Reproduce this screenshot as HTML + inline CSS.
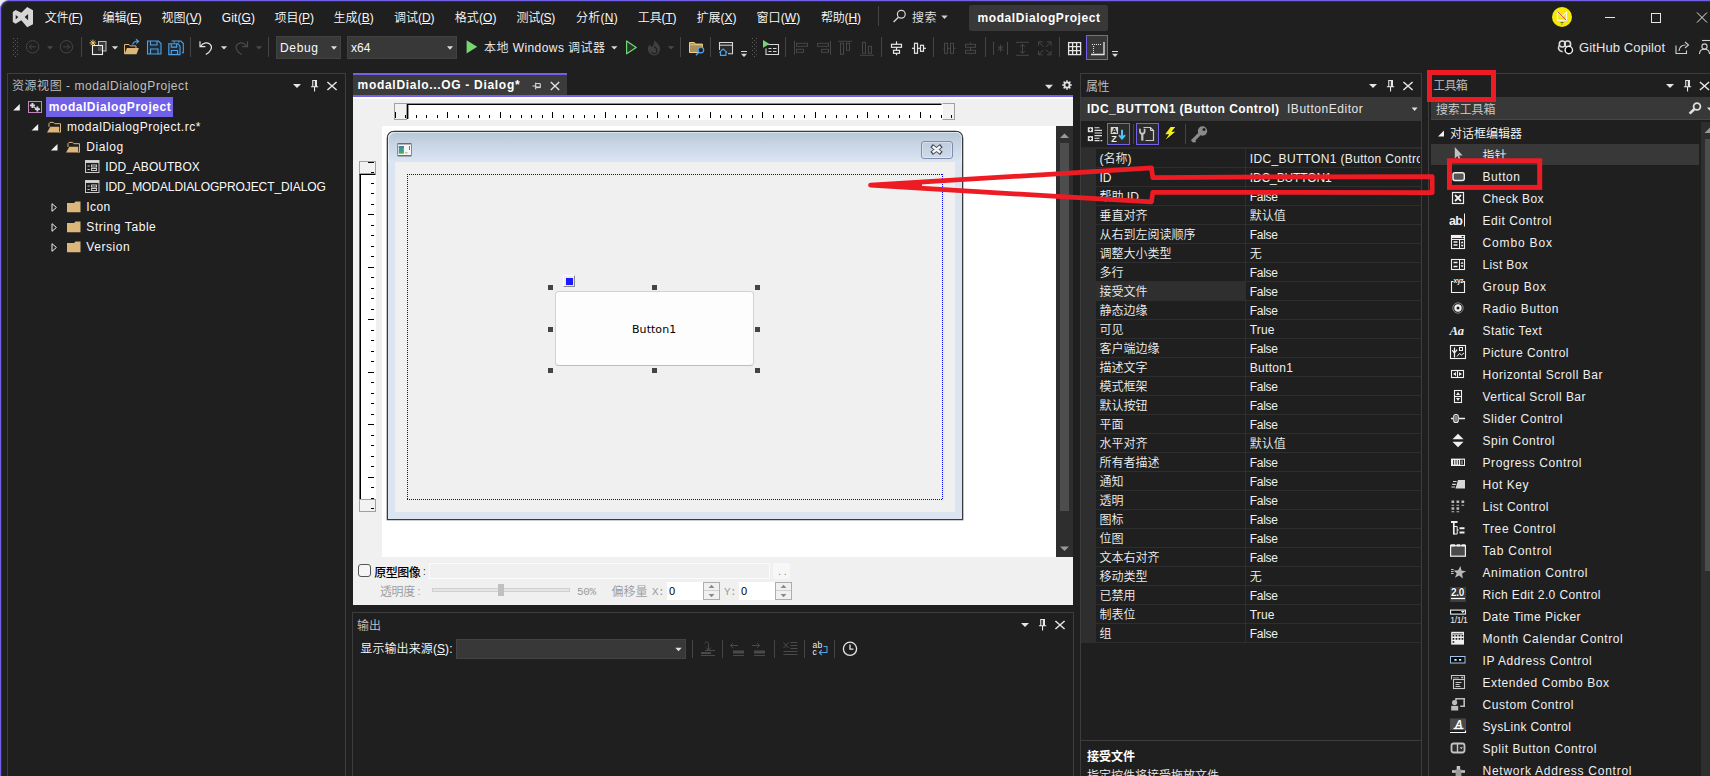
<!DOCTYPE html>
<html lang="zh-CN"><head><meta charset="utf-8">
<title>modalDialogProject - Microsoft Visual Studio</title>
<style>
html,body{margin:0;padding:0;}
body{width:1710px;height:776px;overflow:hidden;background:#1f1f1f;position:relative;
 font-family:"Liberation Sans","Noto Sans CJK SC",sans-serif;font-size:12px;}
.r{position:absolute;}
.t{position:absolute;white-space:nowrap;font-weight:350;}
.cj{font-family:"Noto Sans CJK SC","Liberation Sans",sans-serif;}
.tah{font-family:"DejaVu Sans","Liberation Sans",sans-serif;}
.mono{font-family:"Liberation Mono",monospace;}
svg.ov{position:absolute;left:0;top:0;}
</style></head><body>
<div class="r" style="left:0px;top:0px;width:10px;height:10px;background:#e9e9ee;"></div>
<div class="r" style="left:0px;top:0px;width:1710px;height:776px;background:#1f1f1f;border-top-left-radius:9px;border-top:1px solid #7160e8;border-left:1px solid #7160e8;box-shadow:inset 1px 1px 0 rgba(113,96,232,.22);box-sizing:border-box;"></div>
<div class="r" style="left:878px;top:6px;width:1px;height:20px;background:#444;"></div>
<div class="r" style="left:969px;top:5px;width:139px;height:26px;background:#383838;border-radius:2px;"></div>
<div class="r" style="left:81px;top:37px;width:1px;height:20px;background:#444444;"></div>
<div class="r" style="left:190px;top:37px;width:1px;height:20px;background:#444444;"></div>
<div class="r" style="left:268px;top:37px;width:1px;height:20px;background:#444444;"></div>
<div class="r" style="left:276px;top:36px;width:65px;height:23px;background:#383838;border:1px solid #424242;box-sizing:border-box;"></div>
<div class="r" style="left:347px;top:36px;width:110px;height:23px;background:#383838;border:1px solid #424242;box-sizing:border-box;"></div>
<div class="r" style="left:680px;top:37px;width:1px;height:20px;background:#444444;"></div>
<div class="r" style="left:710px;top:37px;width:1px;height:20px;background:#444444;"></div>
<div class="r" style="left:785px;top:37px;width:1px;height:20px;background:#444444;"></div>
<div class="r" style="left:881px;top:37px;width:1px;height:20px;background:#444444;"></div>
<div class="r" style="left:933px;top:37px;width:1px;height:20px;background:#444444;"></div>
<div class="r" style="left:985px;top:37px;width:1px;height:20px;background:#444444;"></div>
<div class="r" style="left:1059px;top:37px;width:1px;height:20px;background:#444444;"></div>
<div class="r" style="left:1086px;top:35px;width:22px;height:25px;background:#383838;border:1px solid #7160e8;box-sizing:border-box;"></div>
<div class="r" style="left:7px;top:73px;width:339px;height:720px;border:1px solid #3d3d3d;box-sizing:border-box;"></div>
<div class="r" style="left:46px;top:97px;width:127px;height:20px;background:#7160e8;"></div>
<div class="r" style="left:353px;top:73px;width:214px;height:24px;background:#3b3b3b;border-top:2px solid #7160e8;box-sizing:border-box;"></div>
<div class="r" style="left:353px;top:95px;width:720px;height:2px;background:#7160e8;"></div>
<div class="r" style="left:353px;top:97px;width:720px;height:508px;background:#f0f0f0;"></div>
<div class="r" style="left:353px;top:97px;width:720px;height:2px;background:#ffffff;"></div>
<div class="r" style="left:382px;top:126px;width:675px;height:431px;background:#ffffff;"></div>
<div class="r" style="left:1056px;top:126px;width:17px;height:431px;background:#2e2e2e;"></div>
<div class="r" style="left:1060px;top:143px;width:9px;height:368px;background:#4d4d4d;"></div>
<div class="r" style="left:394px;top:103px;width:561px;height:17px;background:#ffffff;"></div>
<div class="r" style="left:394px;top:103px;width:13px;height:17px;background:#f2f2f2;border:1px solid #a0a0a0;box-sizing:border-box;"></div>
<div class="r" style="left:942px;top:103px;width:13px;height:17px;background:#f2f2f2;border:1px solid #a0a0a0;box-sizing:border-box;border-left-color:#ffffff;"></div>
<div class="r" style="left:359px;top:161px;width:17px;height:351px;background:#ffffff;"></div>
<div class="r" style="left:359px;top:161px;width:17px;height:13px;background:#f2f2f2;border:1px solid #a0a0a0;box-sizing:border-box;"></div>
<div class="r" style="left:359px;top:499px;width:17px;height:13px;background:#f2f2f2;border:1px solid #a0a0a0;box-sizing:border-box;"></div>
<div class="r" style="left:387px;top:131px;width:576px;height:389px;background:#dbe5f2;border:1px solid #3a3a3a;box-sizing:border-box;border-radius:7px 7px 0 0;box-shadow:0 0 0 0.3px #3a3a3a;"></div>
<div class="r" style="left:388px;top:132px;width:574px;height:31px;border-radius:6px 6px 0 0;background:linear-gradient(#b7c7d8,#c9d6e6 45%,#dce6f4);box-shadow:inset 1px 1px 0 rgba(255,255,255,.55), inset -1px 0 0 rgba(255,255,255,.4);"></div>
<div class="r" style="left:395px;top:162px;width:560px;height:350px;background:#f0f0f0;"></div>
<div class="r" style="left:921px;top:141px;width:32px;height:18px;border:1px solid #7f8daa;box-sizing:border-box;border-radius:3px;background:linear-gradient(#bfccde,#cfdbea);box-shadow:inset 0 0 0 1px rgba(255,255,255,.35);"></div>
<div class="r" style="left:407px;top:174px;width:536px;height:1px;background:repeating-linear-gradient(90deg,#0000ff 0 1px,transparent 1px 2px);"></div>
<div class="r" style="left:407px;top:499px;width:536px;height:1px;background:repeating-linear-gradient(90deg,#0000ff 0 1px,transparent 1px 2px);"></div>
<div class="r" style="left:407px;top:174px;width:1px;height:326px;background:repeating-linear-gradient(180deg,#0000ff 0 1px,transparent 1px 2px);"></div>
<div class="r" style="left:942px;top:174px;width:1px;height:326px;background:repeating-linear-gradient(180deg,#0000ff 0 1px,transparent 1px 2px);"></div>
<div class="r" style="left:555px;top:291px;width:199px;height:75px;background:#fdfdfd;border:1px solid #d2d2d2;box-sizing:border-box;border-radius:4px;border-bottom-color:#bdbdbd;"></div>
<div class="r" style="left:548px;top:285px;width:5px;height:5px;background:#444444;"></div>
<div class="r" style="left:548px;top:327px;width:5px;height:5px;background:#444444;"></div>
<div class="r" style="left:548px;top:368px;width:5px;height:5px;background:#444444;"></div>
<div class="r" style="left:652px;top:285px;width:5px;height:5px;background:#444444;"></div>
<div class="r" style="left:652px;top:368px;width:5px;height:5px;background:#444444;"></div>
<div class="r" style="left:755px;top:285px;width:5px;height:5px;background:#444444;"></div>
<div class="r" style="left:755px;top:327px;width:5px;height:5px;background:#444444;"></div>
<div class="r" style="left:755px;top:368px;width:5px;height:5px;background:#444444;"></div>
<div class="r" style="left:563px;top:275px;width:12px;height:12px;background:#ececec;border:1px solid;border-color:#ffffff #8a8a8a #8a8a8a #ffffff;box-sizing:border-box;"></div>
<div class="r" style="left:566px;top:278px;width:7px;height:7px;background:#1a1aff;"></div>
<div class="r" style="left:358px;top:564px;width:13px;height:13px;background:#f5f5f5;border:1px solid #555555;box-sizing:border-box;border-radius:3px;"></div>
<div class="r" style="left:429px;top:563px;width:341px;height:16px;background:#f0f0f0;border:1px solid #fbfbfb;box-sizing:border-box;"></div>
<div class="r" style="left:773px;top:563px;width:17px;height:16px;background:#f7f7f7;border-radius:3px;"></div>
<div class="r" style="left:432px;top:588px;width:138px;height:4px;background:#e4e4e4;border:1px solid #d0d0d0;box-sizing:border-box;"></div>
<div class="r" style="left:498px;top:584px;width:6px;height:12px;background:#c0c0c0;"></div>
<div class="r" style="left:667px;top:582px;width:53px;height:18px;background:#ffffff;"></div>
<div class="r" style="left:703px;top:582px;width:17px;height:18px;background:#f0f0f0;border:1px solid #adadad;box-sizing:border-box;"></div>
<div class="r" style="left:704px;top:590px;width:15px;height:1px;background:#d0d0d0;"></div>
<div class="r" style="left:739px;top:582px;width:53px;height:18px;background:#ffffff;"></div>
<div class="r" style="left:775px;top:582px;width:17px;height:18px;background:#f0f0f0;border:1px solid #adadad;box-sizing:border-box;"></div>
<div class="r" style="left:776px;top:590px;width:15px;height:1px;background:#d0d0d0;"></div>
<div class="r" style="left:352px;top:612px;width:722px;height:180px;border:1px solid #3d3d3d;box-sizing:border-box;"></div>
<div class="r" style="left:456px;top:639px;width:230px;height:20px;background:#383838;border:1px solid #434343;box-sizing:border-box;"></div>
<div class="r" style="left:692px;top:640px;width:1px;height:18px;background:#444;"></div>
<div class="r" style="left:722px;top:640px;width:1px;height:18px;background:#444;"></div>
<div class="r" style="left:774px;top:640px;width:1px;height:18px;background:#444;"></div>
<div class="r" style="left:804px;top:640px;width:1px;height:18px;background:#444;"></div>
<div class="r" style="left:834px;top:640px;width:1px;height:18px;background:#444;"></div>
<div class="r" style="left:1080px;top:73px;width:342px;height:720px;border:1px solid #3d3d3d;box-sizing:border-box;"></div>
<div class="r" style="left:1081px;top:97px;width:340px;height:24px;background:#383838;"></div>
<div class="r" style="left:1107px;top:123px;width:23px;height:22px;background:#2c2c2c;border:1px solid #7160e8;box-sizing:border-box;"></div>
<div class="r" style="left:1133px;top:124px;width:1px;height:20px;background:#444;"></div>
<div class="r" style="left:1136px;top:123px;width:23px;height:22px;background:#2c2c2c;border:1px solid #7160e8;box-sizing:border-box;"></div>
<div class="r" style="left:1185px;top:124px;width:1px;height:20px;background:#444;"></div>
<div class="r" style="left:1081px;top:147px;width:15px;height:496px;background:#2e2e2e;"></div>
<div class="r" style="left:1081px;top:147px;width:340px;height:2px;background:#2c2c2c;"></div>
<div class="r" style="left:1096px;top:148px;width:325px;height:1px;background:#2e2e2e;"></div>
<div class="r" style="left:1096px;top:167px;width:325px;height:1px;background:#2e2e2e;"></div>
<div class="r" style="left:1096px;top:186px;width:325px;height:1px;background:#2e2e2e;"></div>
<div class="r" style="left:1096px;top:205px;width:325px;height:1px;background:#2e2e2e;"></div>
<div class="r" style="left:1096px;top:224px;width:325px;height:1px;background:#2e2e2e;"></div>
<div class="r" style="left:1096px;top:243px;width:325px;height:1px;background:#2e2e2e;"></div>
<div class="r" style="left:1096px;top:262px;width:325px;height:1px;background:#2e2e2e;"></div>
<div class="r" style="left:1096px;top:281px;width:325px;height:1px;background:#2e2e2e;"></div>
<div class="r" style="left:1096px;top:282px;width:149px;height:18px;background:#2f2f2f;"></div>
<div class="r" style="left:1096px;top:300px;width:325px;height:1px;background:#2e2e2e;"></div>
<div class="r" style="left:1096px;top:319px;width:325px;height:1px;background:#2e2e2e;"></div>
<div class="r" style="left:1096px;top:338px;width:325px;height:1px;background:#2e2e2e;"></div>
<div class="r" style="left:1096px;top:357px;width:325px;height:1px;background:#2e2e2e;"></div>
<div class="r" style="left:1096px;top:376px;width:325px;height:1px;background:#2e2e2e;"></div>
<div class="r" style="left:1096px;top:395px;width:325px;height:1px;background:#2e2e2e;"></div>
<div class="r" style="left:1096px;top:414px;width:325px;height:1px;background:#2e2e2e;"></div>
<div class="r" style="left:1096px;top:433px;width:325px;height:1px;background:#2e2e2e;"></div>
<div class="r" style="left:1096px;top:452px;width:325px;height:1px;background:#2e2e2e;"></div>
<div class="r" style="left:1096px;top:471px;width:325px;height:1px;background:#2e2e2e;"></div>
<div class="r" style="left:1096px;top:490px;width:325px;height:1px;background:#2e2e2e;"></div>
<div class="r" style="left:1096px;top:509px;width:325px;height:1px;background:#2e2e2e;"></div>
<div class="r" style="left:1096px;top:528px;width:325px;height:1px;background:#2e2e2e;"></div>
<div class="r" style="left:1096px;top:547px;width:325px;height:1px;background:#2e2e2e;"></div>
<div class="r" style="left:1096px;top:566px;width:325px;height:1px;background:#2e2e2e;"></div>
<div class="r" style="left:1096px;top:585px;width:325px;height:1px;background:#2e2e2e;"></div>
<div class="r" style="left:1096px;top:604px;width:325px;height:1px;background:#2e2e2e;"></div>
<div class="r" style="left:1096px;top:623px;width:325px;height:1px;background:#2e2e2e;"></div>
<div class="r" style="left:1096px;top:642px;width:325px;height:1px;background:#2e2e2e;"></div>
<div class="r" style="left:1245px;top:148px;width:1px;height:495px;background:#2e2e2e;"></div>
<div class="r" style="left:1081px;top:740px;width:340px;height:1px;background:#3d3d3d;"></div>
<div class="r" style="left:1428px;top:73px;width:300px;height:720px;border:1px solid #3d3d3d;box-sizing:border-box;"></div>
<div class="r" style="left:1431px;top:97px;width:279px;height:23px;background:#383838;border-bottom:1px solid #464646;box-sizing:border-box;"></div>
<div class="r" style="left:1701px;top:122px;width:9px;height:660px;background:#2e2e2e;"></div>
<div class="r" style="left:1705px;top:139px;width:5px;height:432px;background:#4d4d4d;"></div>
<div class="r" style="left:1431px;top:144px;width:268px;height:21px;background:#383838;"></div>
<div class="r" style="left:1450px;top:587px;width:16px;height:15px;background:#3e3e3e;"></div>
<svg class="ov" width="1710" height="776" viewBox="0 0 1710 776">
<path d="M27.2 7L33 10.2V24.2L27.2 27.2L21.3 20.2L15.7 23.8L12.8 21.9V11.9L15.7 10L21.3 12.8Z M28.1 14V20.2L24.7 17.1Z M15.7 14.9V19.4L18.3 17.1Z" fill="#d6d6d6" fill-rule="evenodd"/>
<circle cx="901.3" cy="14.3" r="3.9" fill="none" stroke="#d8d8d8" stroke-width="1.2"/>
<path d="M898.4 17.2L893.6 22" fill="none" stroke="#d8d8d8" stroke-width="1.3" />
<path d="M941.25 15.55h6.5l-3.25 3.5z" fill="#d0d0d0" />
<circle cx="1562" cy="17" r="10" fill="#f5e90a"/>
<path d="M1557.5 12.3v8h9v-8l-4.5 4.4z" fill="none" stroke="#fbf6dc" stroke-width="1.3" />
<path d="M1557.6 11.6l8.4 8.6" fill="none" stroke="#d23c6e" stroke-width="1" />
<path d="M1560.5 22.5h3M1561.3 24h1.4" fill="none" stroke="#5a4c10" stroke-width="0.8" />
<line x1="1605" y1="17.5" x2="1615" y2="17.5" stroke="#e6e6e6" stroke-width="1"/>
<rect x="1651.5" y="13.5" width="9" height="9" fill="none" stroke="#e6e6e6" stroke-width="1"/>
<path d="M1697 12.5L1707 22.5M1707 12.5L1697 22.5" fill="none" stroke="#e6e6e6" stroke-width="1" />
<path d="M13 38h1v1h-1zM17 38h1v1h-1zM15 40h1v1h-1zM13 42h1v1h-1zM17 42h1v1h-1zM15 44h1v1h-1zM13 46h1v1h-1zM17 46h1v1h-1zM15 48h1v1h-1zM13 50h1v1h-1zM17 50h1v1h-1zM15 52h1v1h-1zM13 54h1v1h-1zM17 54h1v1h-1zM15 56h1v1h-1z" fill="#5c5c5c" />
<circle cx="32.6" cy="46.8" r="6.2" fill="none" stroke="#454545" stroke-width="1"/>
<path d="M35.800000000000004 46.8H29.400000000000002M29.400000000000002 46.8l2.6 -2.6M29.400000000000002 46.8l2.6 2.6" fill="none" stroke="#454545" stroke-width="1" />
<circle cx="66.4" cy="46.8" r="6.2" fill="none" stroke="#454545" stroke-width="1"/>
<path d="M63.2 46.8H69.60000000000001M69.60000000000001 46.8l-2.6 -2.6M69.60000000000001 46.8l-2.6 2.6" fill="none" stroke="#454545" stroke-width="1" />
<path d="M47.0 46.199999999999996h6l-3.0 3.4z" fill="#4a4a4a" />
<rect x="98.5" y="41.5" width="7.5" height="9.5" fill="#3a3a3a" stroke="#bdbdbd" stroke-width="1"/>
<rect x="92.5" y="45.5" width="10" height="9" fill="#2b2b2b" stroke="#f0f0f0" stroke-width="1.1"/>
<rect x="98" y="46.5" width="4" height="4.5" fill="#555555"/>
<path d="M92.9 39.6v6.6M89.6 42.9h6.6M90.6 40.6l4.6 4.6M95.2 40.6l-4.6 4.6" fill="none" stroke="#f5d67b" stroke-width="0.9" />
<path d="M111.8 46.199999999999996h6.4l-3.2 3.4z" fill="#d8d8d8" />
<path d="M124.5 54V44.5h4.5l1.2 1.4h5.8V48" fill="none" stroke="#dcb67a" stroke-width="1" />
<path d="M124.5 54.3l2.4-6.3h12l-2.4 6.3z" fill="#dcb67a" />
<path d="M132.5 44.6c1-2.4 3.3-3.6 5.4-3.2M136 39.3l2.6 2-2.3 2.3" fill="none" stroke="#4ea3e8" stroke-width="1.1" />
<path d="M147.5 41h11.0l2.5 2.5v10.5h-13.5z" fill="#1f2b36" stroke="#4ea3e8" stroke-width="1.1" />
<path d="M150.5 41v4.0h6.5v-4.0M150.5 54.0v-5.0h7.5v5.0" fill="none" stroke="#4ea3e8" stroke-width="1.1" />
<path d="M171.5 41h9.3l2.5 2.5v9.3h-1.6" fill="none" stroke="#4ea3e8" stroke-width="1.1" />
<path d="M174.2 41v1.8M178.8 41v1.8" fill="none" stroke="#4ea3e8" stroke-width="1" />
<path d="M168.8 43.8h9.129999999999999l2.0749999999999997 2.0749999999999997v8.715h-11.205z" fill="#1f2b36" stroke="#4ea3e8" stroke-width="1.1" />
<path d="M171.29000000000002 43.8v3.32h5.395v-3.32M171.29000000000002 54.589999999999996v-4.1499999999999995h6.225v4.1499999999999995" fill="none" stroke="#4ea3e8" stroke-width="1.1" />
<path d="M200 41.2v5.4h5.4" fill="none" stroke="#e6e6e6" stroke-width="1.2" />
<path d="M200.6 46.2c2.6-3.6 7.2-4.6 9.8-1.6c2.4 2.9 0.6 6.9-4.6 9.9" fill="none" stroke="#e6e6e6" stroke-width="1.2" />
<path d="M220.8 46.199999999999996h6.4l-3.2 3.4z" fill="#d8d8d8" />
<path d="M247.5 41.2v5.4h-5.4" fill="none" stroke="#4a4a4a" stroke-width="1.2" />
<path d="M246.9 46.2c-2.6-3.6-7.2-4.6-9.8-1.6c-2.4 2.9-0.6 6.9 4.6 9.9" fill="none" stroke="#4a4a4a" stroke-width="1.2" />
<path d="M255.8 46.199999999999996h6.4l-3.2 3.4z" fill="#4a4a4a" />
<path d="M331.0 46.3h6l-3.0 3.4z" fill="#e0e0e0" />
<path d="M447.0 46.3h6l-3.0 3.4z" fill="#e0e0e0" />
<path d="M466.6 40.2v13.2l10.6-6.6z" fill="#76d672" />
<path d="M611.0999999999999 46.199999999999996h6.4l-3.2 3.4z" fill="#d8d8d8" />
<path d="M626.6 41v12.8l9.6-6.4z" fill="#22382a" stroke="#76d672" stroke-width="1.2" stroke-linejoin="round"/>
<path d="M654 40.5c3.5 2 6.2 5.2 6.2 8.6a6 6 0 0 1-12.3 .4c-.2-2.3 1-4.3 2.3-5.2c0 1.4 .6 2.3 1.6 2.6c1.7-1.3 2.6-3.6 2.2-6.4z" fill="#3f3f3f" />
<path d="M654.2 46.5c2 1.4 3 3 2.8 4.8a3 3 0 0 1-5.7 .6" fill="none" stroke="#1f1f1f" stroke-width="1.1" />
<path d="M667.8 46.199999999999996h6.4l-3.2 3.4z" fill="#4a4a4a" />
<path d="M689.5 52.5V42.5h4.8l1.3 1.6h6.8v8.4z" fill="#a8905e" stroke="#f0d08a" stroke-width="1" />
<path d="M689.5 44.8h12.8" fill="none" stroke="#f0d08a" stroke-width="0.8" />
<circle cx="700.9" cy="50.1" r="2.8" fill="#1f1f1f" stroke="#4ea3e8" stroke-width="1.2"/>
<path d="M698.9 52.2L696 55.2" fill="none" stroke="#4ea3e8" stroke-width="1.3" />
<path d="M719.5 50V42.5h13v11.2h-4.5" fill="#2b2b2b" stroke="#d6d6d6" stroke-width="1.1" />
<line x1="719.5" y1="45.2" x2="732.5" y2="45.2" stroke="#d6d6d6" stroke-width="1"/>
<path d="M719.3 52.6l3.9-3.5 3.9 3.5M720.5 52v3.4h5.4v-3.4" fill="#1f1f1f" stroke="#4ea3e8" stroke-width="1.2" />
<line x1="741" y1="51.5" x2="747" y2="51.5" stroke="#d8d8d8" stroke-width="1"/>
<path d="M741.0 53.699999999999996h6l-3.0 3.2z" fill="#d8d8d8" />
<path d="M752 38h1v1h-1zM756 38h1v1h-1zM754 40h1v1h-1zM752 42h1v1h-1zM756 42h1v1h-1zM754 44h1v1h-1zM752 46h1v1h-1zM756 46h1v1h-1zM754 48h1v1h-1zM752 50h1v1h-1zM756 50h1v1h-1zM754 52h1v1h-1zM752 54h1v1h-1zM756 54h1v1h-1zM754 56h1v1h-1z" fill="#5c5c5c" />
<path d="M767 44.5h11.5v10h-12.5v-6" fill="none" stroke="#d6d6d6" stroke-width="1.1" />
<path d="M763 40v7.8l6.4-3.9z" fill="#76d672" />
<path d="M768.5 48.5h3M773 48.5h3.5M768.5 51.5h3M773 51.5h3.5" fill="none" stroke="#d6d6d6" stroke-width="1.1" />
<g transform="translate(0,0.8)">
<path d="M794.5 40v14" fill="none" stroke="#474747" stroke-width="1" />
<rect x="796.5" y="42.5" width="11" height="3" fill="none" stroke="#474747"/><rect x="796.5" y="48.5" width="7" height="3" fill="none" stroke="#474747"/>
<path d="M830.5 40v14" fill="none" stroke="#474747" stroke-width="1" />
<rect x="817.5" y="42.5" width="11" height="3" fill="none" stroke="#474747"/><rect x="821.5" y="48.5" width="7" height="3" fill="none" stroke="#474747"/>
<path d="M838 40.5h14" fill="none" stroke="#474747" stroke-width="1" />
<rect x="840.5" y="42.5" width="3" height="11" fill="none" stroke="#474747"/><rect x="846.5" y="42.5" width="3" height="7" fill="none" stroke="#474747"/>
<path d="M860 54.5h14" fill="none" stroke="#474747" stroke-width="1" />
<rect x="862.5" y="41.5" width="3" height="11" fill="none" stroke="#474747"/><rect x="868.5" y="45.5" width="3" height="7" fill="none" stroke="#474747"/>
<path d="M896.5 40.5v14" fill="none" stroke="#e6e6e6" stroke-width="1.2" />
<rect x="891.5" y="43.5" width="10" height="3" fill="#1f1f1f" stroke="#e6e6e6" stroke-width="1.2"/><rect x="893.5" y="49.5" width="6" height="3" fill="#1f1f1f" stroke="#e6e6e6" stroke-width="1.2"/>
<path d="M912 47.5h14" fill="none" stroke="#e6e6e6" stroke-width="1.2" />
<rect x="914.5" y="42.5" width="3" height="10" fill="#1f1f1f" stroke="#e6e6e6" stroke-width="1.2"/><rect x="920.5" y="44.5" width="3" height="6" fill="#1f1f1f" stroke="#e6e6e6" stroke-width="1.2"/>
<path d="M943.5 47.5h12" fill="none" stroke="#474747" stroke-width="1" />
<rect x="944.5" y="42.5" width="3" height="10" fill="#1f1f1f" stroke="#474747"/><rect x="950.5" y="42.5" width="3" height="10" fill="#1f1f1f" stroke="#474747"/>
<path d="M970.5 41.5v12" fill="none" stroke="#474747" stroke-width="1" />
<rect x="965.5" y="43.5" width="10" height="3" fill="#1f1f1f" stroke="#474747"/><rect x="965.5" y="49.5" width="10" height="3" fill="#1f1f1f" stroke="#474747"/>
<path d="M993.5 41v13M1007.5 41v13" fill="none" stroke="#474747" stroke-width="1" />
<path d="M1000.5 44v7M997.6 45.6l5.8 3.8M1003.4 45.6l-5.8 3.8" fill="none" stroke="#474747" stroke-width="1" />
<path d="M1016 41.5h13M1016 54.5h13" fill="none" stroke="#474747" stroke-width="1" />
<path d="M1022.5 43.5v9M1020 46l2.5-2.5 2.5 2.5M1020 50l2.5 2.5 2.5-2.5" fill="none" stroke="#474747" stroke-width="1" />
<path d="M1038.5 45v-4h4M1047 41h4v4M1051 50v4h-4M1042.5 54h-4v-4" fill="none" stroke="#474747" stroke-width="1" />
<path d="M1039 41.5l4.5 4.5M1050.5 41.5l-4.5 4.5M1050.5 53.5l-4.5-4.5M1039 53.5l4.5-4.5" fill="none" stroke="#474747" stroke-width="1" />
</g>
<rect x="1068.6" y="42.6" width="12" height="12" fill="none" stroke="#e6e6e6" stroke-width="1.3"/>
<path d="M1072.6 42.6v12M1076.6 42.6v12M1068.6 46.6h12M1068.6 50.6h12" fill="none" stroke="#e6e6e6" stroke-width="1.3" />
<path d="M1104 42v12.5h-13" fill="none" stroke="#e6e6e6" stroke-width="1.3" />
<path d="M1092 44.5h10" fill="none" stroke="#e6e6e6" stroke-width="1" stroke-dasharray="1 1"/>
<path d="M1093.5 46v8" fill="none" stroke="#e6e6e6" stroke-width="1" stroke-dasharray="1 1"/>
<line x1="1112" y1="51.5" x2="1118" y2="51.5" stroke="#d8d8d8" stroke-width="1"/>
<path d="M1112.0 53.699999999999996h6l-3.0 3.2z" fill="#d8d8d8" />
<circle cx="1562.3" cy="44" r="3" fill="none" stroke="#dcdcdc" stroke-width="1.6"/>
<circle cx="1567.6" cy="44" r="3" fill="none" stroke="#dcdcdc" stroke-width="1.6"/>
<path d="M1559.2 45.5c-1.6 3 -.6 5.4 3.4 6.2" fill="none" stroke="#dcdcdc" stroke-width="1.5" />
<circle cx="1568.8" cy="50" r="3.7" fill="#050505" stroke="#f2f2f2" stroke-width="1.4"/>
<path d="M1676 45.5v8h10.5v-3" fill="none" stroke="#d0d0d0" stroke-width="1.1" />
<path d="M1679 51c.5-4 3-6 6.5-6M1685 42l3.5 3-3.5 3" fill="none" stroke="#d0d0d0" stroke-width="1.1" />
<circle cx="1704.5" cy="46.5" r="2.6" fill="none" stroke="#d0d0d0" stroke-width="1.1"/>
<path d="M1699.5 54c0-3.5 2-4.8 5-4.8s5 1.3 5 4.8" fill="none" stroke="#d0d0d0" stroke-width="1.1" />
<path d="M1702 40.5h8" fill="none" stroke="#d0d0d0" stroke-width="1.1" />
<path d="M293.0 83.9h8l-4.0 4.2z" fill="#e6e6e6" />
<path d="M312.2 80.0h4.8v6.2h1.2v1.1h-3.1v4.2h-1.1v-4.2h-3.1v-1.1h1.3z M313.3 81.1v5.1h1.5v-5.1z" fill="#e6e6e6" fill-rule="evenodd"/>
<path d="M327.4 82.0L336.6 90.0M336.6 82.0L327.4 90.0" fill="none" stroke="#e6e6e6" stroke-width="1.5" />
<path d="M19.8 104v6.6h-6.6z" fill="#f0f0f0" />
<rect x="28.5" y="101.5" width="13" height="11" fill="none" stroke="#c586c0" stroke-width="1"/>
<path d="M29.9 105.4h5M32.4 102.9v5M34.9 109.1h5M37.4 106.6v5" fill="none" stroke="#dcdcdc" stroke-width="1.9" />
<path d="M33.5 106.8l2.6 1.6" fill="none" stroke="#d8d8d8" stroke-width="1.2" />
<path d="M38.2 124v6.6h-6.6z" fill="#f0f0f0" />
<path d="M49 126.9V123.5l1-1.1h3.6l1.2 1.3h5.7v8.5h-1.4" fill="none" stroke="#dcb67a" stroke-width="1" />
<path d="M47 132.4l3.3-5.7h8.9v5.7z" fill="#dcb67a" />
<path d="M57.5 144v6.6h-6.6z" fill="#f0f0f0" />
<path d="M68 146.9V143.5l1-1.1h3.6l1.2 1.3h5.7v8.5h-1.4" fill="none" stroke="#dcb67a" stroke-width="1" />
<path d="M66 152.4l3.3-5.7h8.9v5.7z" fill="#dcb67a" />
<rect x="85.5" y="160.5" width="13.5" height="12" fill="none" stroke="#c8c8c8" stroke-width="1"/>
<path d="M85.5 161.9h13.5" fill="none" stroke="#d8d8d8" stroke-width="2" />
<path d="M87.5 166.0h2.2M87.5 169.5h2.2" fill="none" stroke="#c8c8c8" stroke-width="1.2" />
<rect x="91.5" y="165.0" width="5" height="2" fill="none" stroke="#c8c8c8" stroke-width="1"/>
<rect x="91.5" y="168.5" width="5" height="2" fill="none" stroke="#c8c8c8" stroke-width="1"/>
<rect x="85.5" y="180.5" width="13.5" height="12" fill="none" stroke="#c8c8c8" stroke-width="1"/>
<path d="M85.5 181.9h13.5" fill="none" stroke="#d8d8d8" stroke-width="2" />
<path d="M87.5 186.0h2.2M87.5 189.5h2.2" fill="none" stroke="#c8c8c8" stroke-width="1.2" />
<rect x="91.5" y="185.0" width="5" height="2" fill="none" stroke="#c8c8c8" stroke-width="1"/>
<rect x="91.5" y="188.5" width="5" height="2" fill="none" stroke="#c8c8c8" stroke-width="1"/>
<path d="M52.0 203.7v7.6l4.4-3.8z" fill="none" stroke="#f0f0f0" stroke-width="1" />
<path d="M67 203h7.2l1.2-1.5h5.1v10.8h-13.5z" fill="#dcb67a" />
<path d="M52.0 223.7v7.6l4.4-3.8z" fill="none" stroke="#f0f0f0" stroke-width="1" />
<path d="M67 223h7.2l1.2-1.5h5.1v10.8h-13.5z" fill="#dcb67a" />
<path d="M52.0 243.7v7.6l4.4-3.8z" fill="none" stroke="#f0f0f0" stroke-width="1" />
<path d="M67 243h7.2l1.2-1.5h5.1v10.8h-13.5z" fill="#dcb67a" />
<path d="M532.5 86h3.2M535.7 82.6v6.8M535.7 83.6h4.6v4h-4.6M536 87h4.3" fill="none" stroke="#e0e0e0" stroke-width="1" />
<path d="M550.8 82.0L559.2 90.0M559.2 82.0L550.8 90.0" fill="none" stroke="#e6e6e6" stroke-width="1.3" />
<path d="M1045.0 84.7h8l-4.0 4.2z" fill="#e0e0e0" />
<circle cx="1067" cy="85" r="2.6" fill="none" stroke="#e0e0e0" stroke-width="1.8"/>
<path d="M1067 80.2v2M1067 87.8v2M1062.2 85h2M1069.8 85h2M1063.6 81.6l1.4 1.4M1069 87l1.4 1.4M1070.4 81.6l-1.4 1.4M1065 87l-1.4 1.4" fill="none" stroke="#e0e0e0" stroke-width="1.5" />
<path d="M1060 138h9l-4.5-4.6z" fill="#999999" />
<path d="M1060 546.4h9l-4.5 4.6z" fill="#999999" />
<line x1="407" y1="103.5" x2="941.5" y2="103.5" stroke="#8c8c8c" stroke-width="1"/>
<line x1="407" y1="104.5" x2="941.5" y2="104.5" stroke="#000000" stroke-width="1"/>
<line x1="407.7" y1="104" x2="407.7" y2="119" stroke="#000000" stroke-width="1.4"/>
<path d="M395.5 112v6M405.5 115v3M416.5 115v3M426.5 115v3M437.5 115v3M447.5 112v6M458.5 115v3M468.5 115v3M479.5 115v3M489.5 115v3M500.5 112v6M510.5 115v3M521.5 115v3M531.5 115v3M542.5 115v3M552.5 112v6M563.5 115v3M573.5 115v3M584.5 115v3M594.5 115v3M605.5 112v6M615.5 115v3M626.5 115v3M636.5 115v3M647.5 115v3M657.5 112v6M668.5 115v3M678.5 115v3M689.5 115v3M699.5 115v3M710.5 112v6M720.5 115v3M731.5 115v3M741.5 115v3M752.5 115v3M762.5 112v6M773.5 115v3M783.5 115v3M794.5 115v3M804.5 115v3M815.5 112v6M825.5 115v3M836.5 115v3M846.5 115v3M857.5 115v3M867.5 112v6M878.5 115v3M888.5 115v3M899.5 115v3M909.5 115v3M920.5 112v6M930.5 115v3M941.5 115v3M951.5 115v3" fill="none" stroke="#000000" stroke-width="1" />
<line x1="360.2" y1="174" x2="360.2" y2="499" stroke="#000000" stroke-width="1.6"/>
<line x1="359.5" y1="174.5" x2="375.5" y2="174.5" stroke="#000000" stroke-width="1"/>
<path d="M368 162.5h6M371 172.5h3M371 183.5h3M371 193.5h3M371 204.5h3M368 214.5h6M371 225.5h3M371 235.5h3M371 246.5h3M371 256.5h3M368 267.5h6M371 277.5h3M371 288.5h3M371 298.5h3M371 309.5h3M368 319.5h6M371 330.5h3M371 340.5h3M371 351.5h3M371 361.5h3M368 372.5h6M371 382.5h3M371 393.5h3M371 403.5h3M371 414.5h3M368 424.5h6M371 435.5h3M371 445.5h3M371 456.5h3M371 466.5h3M368 477.5h6M371 487.5h3M371 498.5h3M371 508.5h3" fill="none" stroke="#000000" stroke-width="1" />
<rect x="397.5" y="143.8" width="14" height="12" rx="1" fill="#f6f6f6" stroke="#8a8a8a" stroke-width="1"/>
<path d="M397.5 143.8h14M397.5 155.8h14" fill="none" stroke="#5a5a5a" stroke-width="1.1" />
<rect x="398.8" y="146" width="5" height="7.4" fill="#3f9a80"/>
<rect x="398.8" y="146" width="5" height="2" fill="#4a7cc0"/>
<rect x="398.8" y="151" width="5" height="2.4" fill="#3fae5a"/>
<rect x="405" y="152.2" width="2.6" height="1.2" fill="#b0b0b0"/>
<rect x="409" y="146" width="1" height="4" fill="#3f8f9a"/>
<path d="M931.6 145.7l9.8 7.6M941.4 145.7l-9.8 7.6" fill="none" stroke="#454a58" stroke-width="4.2" />
<path d="M932.6 146.5l7.8 6M940.4 146.5l-7.8 6" fill="none" stroke="#f6f6f6" stroke-width="2.3" />
<path d="M708.5 588h6l-3-3.2z M708.5 594h6l-3 3.2z" fill="#8a8a8a" />
<path d="M780.5 588h6l-3-3.2z M780.5 594h6l-3 3.2z" fill="#8a8a8a" />
<path d="M1021.0 622.9h8l-4.0 4.2z" fill="#e6e6e6" />
<path d="M1040.2 619.0h4.8v6.2h1.2v1.1h-3.1v4.2h-1.1v-4.2h-3.1v-1.1h1.3z M1041.3 620.1v5.1h1.5v-5.1z" fill="#e6e6e6" fill-rule="evenodd"/>
<path d="M1055.4 621.0L1064.6 629.0M1064.6 621.0L1055.4 629.0" fill="none" stroke="#e6e6e6" stroke-width="1.5" />
<path d="M675.3 647.8h6.4l-3.2 3.4z" fill="#e0e0e0" />
<path d="M708.5 650v-6.3c0-2.4-3.6-2.4-3.6 0M706 647.6l2.5 2.6 2.5-2.6" fill="none" stroke="#4a4a4a" stroke-width="1" />
<path d="M705 650.5h10M701 655.5h14" fill="none" stroke="#4a4a4a" stroke-width="1" />
<path d="M701 653h10" fill="none" stroke="#4a4a4a" stroke-width="2" />
<path d="M730.5 645.5h7.5M730.5 645.5l2.4-2.4M730.5 645.5l2.4 2.4M733 655.5h11" fill="none" stroke="#4a4a4a" stroke-width="1" />
<path d="M733 652h11" fill="none" stroke="#4a4a4a" stroke-width="3" />
<path d="M752 645.5h7.5M759.5 645.5l-2.4-2.4M759.5 645.5l-2.4 2.4M754 655.5h11" fill="none" stroke="#4a4a4a" stroke-width="1" />
<path d="M754 652h11" fill="none" stroke="#4a4a4a" stroke-width="3" />
<path d="M783.5 642.5l5 5.5M788.5 642.5l-5 5.5M790.5 642.5h7M790.5 645.5h7M790.5 648.5h7M783.5 651.5h14M783.5 654.5h14" fill="none" stroke="#4a4a4a" stroke-width="1" />
<path d="M823.5 646.5h3.5v6h-7.5M821.8 650l-2.6 2.5 2.6 2.5" fill="none" stroke="#4ea3e8" stroke-width="1.1" />
<circle cx="850" cy="648.8" r="6.6" fill="none" stroke="#e6e6e6" stroke-width="1.3"/>
<path d="M850 644.6v4.6h3.4" fill="none" stroke="#e6e6e6" stroke-width="1.3" />
<path d="M1369.0 83.9h8l-4.0 4.2z" fill="#e6e6e6" />
<path d="M1388.2 80.0h4.8v6.2h1.2v1.1h-3.1v4.2h-1.1v-4.2h-3.1v-1.1h1.3z M1389.3 81.1v5.1h1.5v-5.1z" fill="#e6e6e6" fill-rule="evenodd"/>
<path d="M1403.4 82.0L1412.6 90.0M1412.6 82.0L1403.4 90.0" fill="none" stroke="#e6e6e6" stroke-width="1.5" />
<path d="M1411.6 107.6h6l-3.0 3.4z" fill="#e0e0e0" />
<rect x="1087.8" y="127.2" width="5.2" height="5" fill="#e0e0e0"/>
<path d="M1089 129.7h2.8M1090.4 128.3v2.8" fill="none" stroke="#1f1f1f" stroke-width="1" />
<rect x="1087.8" y="136.1" width="5.2" height="5" fill="#e0e0e0"/>
<path d="M1089 138.6h2.8M1090.4 137.2v2.8" fill="none" stroke="#1f1f1f" stroke-width="1" />
<path d="M1094.5 127.8h5M1094.5 130.4h7.5M1094.5 133h7.5M1094.5 135.6h7.5M1094.5 138.3h5M1094.5 140.6h5M1100.5 140.6h1.8" fill="none" stroke="#e0e0e0" stroke-width="1.1" />
<rect x="1110.7" y="127" width="7.4" height="7" fill="#d8d8d8"/>
<path d="M1122 129.8v7.6M1119 135.2l3 3.4 3-3.4" fill="none" stroke="#4fc3f7" stroke-width="2" />
<path d="M1143.5 127.5h7l3 3v10h-8" fill="none" stroke="#c8c8c8" stroke-width="1.2" />
<path d="M1150.5 127.5v3h3" fill="none" stroke="#e0e0e0" stroke-width="1" />
<path d="M1140 128.8v2.6a2.3 2.3 0 0 0 4.6 0v-2.6" fill="none" stroke="#c8c8c8" stroke-width="1.7" />
<path d="M1142.3 133.6v7" fill="none" stroke="#c8c8c8" stroke-width="2.2" />
<path d="M1171.2 127.6l-5.4 6.8h3.6l-3.8 6 .6 .6 9.4-8.6h-4l4-4.8z" fill="#0a0a0a" />
<path d="M1170.6 127h4.7l-3.8 4.7h3.8l-9.8 8.4 3.6-5.9h-3.8z" fill="#f5ee1c" />
<circle cx="1202.5" cy="131" r="4.7" fill="#8a8a8a"/>
<circle cx="1204" cy="129.5" r="1.5" fill="#1f1f1f"/>
<path d="M1199.5 134l-7.5 7.5" fill="none" stroke="#8a8a8a" stroke-width="3.2" />
<path d="M1193 139.5l2.5 2.5" fill="none" stroke="#8a8a8a" stroke-width="2" />
<path d="M1666.0 83.9h8l-4.0 4.2z" fill="#e6e6e6" />
<path d="M1685.2 80.0h4.8v6.2h1.2v1.1h-3.1v4.2h-1.1v-4.2h-3.1v-1.1h1.3z M1686.3 81.1v5.1h1.5v-5.1z" fill="#e6e6e6" fill-rule="evenodd"/>
<path d="M1699.9 82.0L1709.1 90.0M1709.1 82.0L1699.9 90.0" fill="none" stroke="#e6e6e6" stroke-width="1.5" />
<circle cx="1697" cy="106.5" r="3.4" fill="none" stroke="#e0e0e0" stroke-width="1.8"/>
<path d="M1694.4 109l-4.8 4.6" fill="none" stroke="#e0e0e0" stroke-width="2.6" />
<path d="M1707.0 107.5h5l-2.5 3z" fill="#e0e0e0" />
<path d="M1704.6 133h11l-5.5-5.5z" fill="#999999" />
<path d="M1444 130.5v6h-6z" fill="#f0f0f0" />
<path d="M1454.8 147v11.4l2.6-2.4 1.8 4 1.6-.8-1.8-3.8h3.6z" fill="#c2c2c2" />
<rect x="1453" y="172.7" width="11.3" height="7.8" rx="2" fill="#555555" stroke="#f0f0f0" stroke-width="1.4"/>
<rect x="1452.5" y="192.5" width="11" height="11" fill="none" stroke="#f0f0f0" stroke-width="1.2"/>
<path d="M1455 195l6 6M1461 195l-6 6" fill="none" stroke="#f0f0f0" stroke-width="1.8" />
<path d="M1464.5 213.5v13" fill="none" stroke="#f0f0f0" stroke-width="1" />
<rect x="1451.5" y="235.5" width="13" height="13" fill="none" stroke="#f0f0f0" stroke-width="1.1"/>
<path d="M1451.5 236.8h13" fill="none" stroke="#f0f0f0" stroke-width="2.6" />
<path d="M1461.2 236h2.8l-1.4 1.7z" fill="#1a1a1a" />
<path d="M1451.5 239.5h13M1459.5 239.5v9" fill="none" stroke="#f0f0f0" stroke-width="1" />
<path d="M1453.5 242h4M1453.5 245h4" fill="none" stroke="#f0f0f0" stroke-width="1.3" />
<path d="M1460.6 243.2h3l-1.5-2.2zM1460.6 244.8h3l-1.5 2.2z" fill="#f0f0f0" />
<rect x="1451.5" y="259.5" width="13" height="10" fill="none" stroke="#f0f0f0" stroke-width="1.1"/>
<path d="M1453.5 262.5h4M1453.5 266.5h4" fill="none" stroke="#f0f0f0" stroke-width="1.3" />
<path d="M1459.5 259.5v10" fill="none" stroke="#f0f0f0" stroke-width="1" />
<path d="M1460.6 263.7h3l-1.5-2.2zM1460.6 265.3h3l-1.5 2.2z" fill="#f0f0f0" />
<path d="M1453.5 281.5h-2v11h13v-11h-2" fill="none" stroke="#f0f0f0" stroke-width="1.1" />
<circle cx="1458" cy="308" r="5.2" fill="none" stroke="#8a8a8a" stroke-width="0.9"/>
<circle cx="1458" cy="308" r="2.6" fill="#1a1a1a" stroke="#f0f0f0" stroke-width="2.2"/>
<rect x="1450.5" y="345.5" width="15" height="13" fill="none" stroke="#f0f0f0" stroke-width="1.1"/>
<path d="M1454.5 347.5v10M1452.5 350c0 2 2 2 2 3.5M1456.8 349.5c0 2-2.3 2-2.3 4" fill="none" stroke="#f0f0f0" stroke-width="1.2" />
<rect x="1459.5" y="347.5" width="3" height="3" fill="none" stroke="#f0f0f0" stroke-width="1"/>
<path d="M1457 356.5l2.5-3 2 1.5 2.5-2" fill="none" stroke="#f0f0f0" stroke-width="1" />
<rect x="1451.5" y="370.5" width="12" height="7" fill="none" stroke="#f0f0f0" stroke-width="1.1"/>
<path d="M1457.5 370.5v7" fill="none" stroke="#f0f0f0" stroke-width="1.1" />
<path d="M1456 372v4l-3-2zM1459 372v4l3-2z" fill="#f0f0f0" />
<rect x="1454.5" y="390.5" width="7" height="12" fill="none" stroke="#f0f0f0" stroke-width="1.1"/>
<path d="M1454.5 396.5h7" fill="none" stroke="#f0f0f0" stroke-width="1.1" />
<path d="M1456 395h4l-2-3zM1456 398h4l-2 3z" fill="#f0f0f0" />
<path d="M1451 418.5h2M1459 418.5h6" fill="none" stroke="#f0f0f0" stroke-width="1.3" />
<rect x="1453.8" y="414.5" width="4.4" height="8" rx="2" fill="none" stroke="#f0f0f0" stroke-width="1.2"/>
<path d="M1456 415.5v6" fill="none" stroke="#f0f0f0" stroke-width="1" />
<path d="M1452.5 439.3h11l-5.5-5.6zM1452.5 441.7h11l-5.5 5.6z" fill="#f0f0f0" />
<rect x="1451" y="458.6" width="14" height="7.4" fill="#f0f0f0"/>
<path d="M1453.6 460v4.6M1456 460v4.6M1458.4 460v4.6" fill="none" stroke="#333" stroke-width="1" />
<path d="M1460.2 459.8h3.8v5h-3.8z" fill="#111" />
<path d="M1462 460.4v3.8" fill="none" stroke="#f0f0f0" stroke-width="0.9" />
<path d="M1458 480h7v8.5h-9.5z" fill="#d8d8d8" />
<path d="M1453 481.5h3.6M1452.2 484.3h3.6M1451.4 487h3.6" fill="none" stroke="#d8d8d8" stroke-width="1.2" />
<path d="M1451.5 500.6h2.7v2.5h-2.7zM1451.5 504.8h2.7v1h-2.7zM1456.5 500.6h2.7v2.5h-2.7zM1456.5 504.8h2.7v1h-2.7zM1461.5 500.6h2.7v2.5h-2.7zM1461.5 504.8h2.7v1h-2.7zM1451.5 507.2h2.7v2.5h-2.7zM1451.5 511.3h2.7v1h-2.7zM1456.5 507.2h2.7v2.5h-2.7zM1456.5 511.3h2.7v1h-2.7z" fill="#b8b8b8" />
<path d="M1451 522h6.5" fill="none" stroke="#f0f0f0" stroke-width="2" />
<path d="M1453.8 522v12.5" fill="none" stroke="#f0f0f0" stroke-width="1.7" />
<path d="M1453.8 526.5h3.4v7.5M1453.8 534h3.4M1457.2 530h1.5" fill="none" stroke="#f0f0f0" stroke-width="1" />
<path d="M1459.5 528.3h5M1459.5 532.5h5" fill="none" stroke="#f0f0f0" stroke-width="2" />
<rect x="1450.6" y="545.6" width="14.8" height="10.6" fill="#4a4a4a" stroke="#f0f0f0" stroke-width="1.2"/>
<path d="M1450.6 545.4h4.6M1456.6 545.4h3.6M1461.6 545.4h3.8" fill="none" stroke="#f0f0f0" stroke-width="2.4" />
<path d="M1460.5 566l1 4.6 4.6 .6-4 2.4 .8 5-3.8-3.2-4.2 2.4 1.8-4.4-3-3 4.4-.2z" fill="#b8b8b8" />
<path d="M1451 569.5h2.6M1451 571.5h2.6M1451 573.5h2.6" fill="none" stroke="#c8c8c8" stroke-width="1" />
<path d="M1451 598.5h14" fill="none" stroke="#ffffff" stroke-width="1.2" />
<rect x="1450.6" y="610.1" width="14.8" height="4" fill="#0a0a0a" stroke="#f0f0f0" stroke-width="1.1"/>
<path d="M1461 611h3.6l-1.8 2.2z" fill="#f0f0f0" />
<rect x="1451.2" y="631.8" width="12.8" height="12.8" fill="#f0f0f0"/>
<path d="M1452.6 635.0h1.7v1.6h-1.7zM1455.6 635.0h1.7v1.6h-1.7zM1458.6 635.0h1.7v1.6h-1.7zM1461.6 635.0h1.7v1.6h-1.7zM1452.6 638.1h1.7v1.6h-1.7zM1455.6 638.1h1.7v1.6h-1.7zM1458.6 638.1h1.7v1.6h-1.7zM1461.6 638.1h1.7v1.6h-1.7zM1452.6 641.2h1.7v1.6h-1.7z" fill="#1a1a1a" />
<path d="M1452.4 633.9h10.4" fill="none" stroke="#1a1a1a" stroke-width="0.8" />
<rect x="1450.5" y="656.5" width="14.5" height="6.5" fill="#0c0c0c" stroke="#9fc3e8" stroke-width="1"/>
<path d="M1454.4 659h2.2v1.8h-2.2zM1459 659h2.2v1.8h-2.2z" fill="#f0f0f0" />
<path d="M1451.5 679.5v-4h13v4" fill="none" stroke="#c8c8c8" stroke-width="1.1" />
<path d="M1453 677h6v1.6h-6z" fill="#6a6a6a" />
<path d="M1460.5 676.8h3.4l-1.7 2z" fill="#c8c8c8" />
<rect x="1453.5" y="679.5" width="11" height="9" fill="none" stroke="#c8c8c8" stroke-width="1.1"/>
<path d="M1455.5 682.5h6M1455.5 684.5h4M1455.5 686.5h5" fill="none" stroke="#c8c8c8" stroke-width="1" />
<path d="M1456 700.5v-1.8h8.2v7.6h-4" fill="none" stroke="#bdbdbd" stroke-width="1.6" />
<circle cx="1454.6" cy="702.6" r="2.6" fill="#bdbdbd"/>
<path d="M1451.2 710.5v-4.6h7v4.6z" fill="#bdbdbd" />
<rect x="1450" y="718.5" width="16" height="11.5" fill="#4a4a4a"/>
<path d="M1453.5 728.5h10" fill="none" stroke="#ffffff" stroke-width="1.4" />
<path d="M1450 732.5h15.5v-2" fill="none" stroke="#ffffff" stroke-width="1.2" />
<rect x="1451.5" y="743.5" width="13" height="9" rx="2.2" fill="#2c2c2c" stroke="#c4c4c4" stroke-width="1.8"/>
<path d="M1457.5 743.5v9" fill="none" stroke="#c4c4c4" stroke-width="1.4" />
<path d="M1459.6 747.2h3.4l-1.7 2z" fill="#c4c4c4" />
<path d="M1452 771.5h13" fill="none" stroke="#c4c4c4" stroke-width="2.6" />
<rect x="1456.7" y="766" width="3.4" height="4" fill="#c4c4c4"/>
<rect x="1455.6" y="769.4" width="5.8" height="7" fill="#9a9a9a"/>
</svg>
<span id="t1" class="t" style="left:44.8px;top:10px;line-height:16px;font-size:12px;color:#fafafa;letter-spacing:-0.336px;">文件(<u>F</u>)</span>
<span id="t2" class="t" style="left:102.6px;top:10px;line-height:16px;font-size:12px;color:#fafafa;letter-spacing:-0.204px;">编辑(<u>E</u>)</span>
<span id="t3" class="t" style="left:161.5px;top:10px;line-height:16px;font-size:12px;color:#fafafa;letter-spacing:0.046px;">视图(<u>V</u>)</span>
<span id="t4" class="t" style="left:221.8px;top:10px;line-height:16px;font-size:12px;color:#fafafa;letter-spacing:0.102px;">Git(<u>G</u>)</span>
<span id="t5" class="t" style="left:274.6px;top:10px;line-height:16px;font-size:12px;color:#fafafa;letter-spacing:-0.179px;">项目(<u>P</u>)</span>
<span id="t6" class="t" style="left:333.5px;top:10px;line-height:16px;font-size:12px;color:#fafafa;letter-spacing:0.046px;">生成(<u>B</u>)</span>
<span id="t7" class="t" style="left:393.9px;top:10px;line-height:16px;font-size:12px;color:#fafafa;letter-spacing:0.007px;">调试(<u>D</u>)</span>
<span id="t8" class="t" style="left:454.7px;top:10px;line-height:16px;font-size:12px;color:#fafafa;letter-spacing:0.114px;">格式(<u>O</u>)</span>
<span id="t9" class="t" style="left:516.6px;top:10px;line-height:16px;font-size:12px;color:#fafafa;letter-spacing:-0.329px;">测试(<u>S</u>)</span>
<span id="t10" class="t" style="left:576px;top:10px;line-height:16px;font-size:12px;color:#fafafa;letter-spacing:0.257px;">分析(<u>N</u>)</span>
<span id="t11" class="t" style="left:637.8px;top:10px;line-height:16px;font-size:12px;color:#fafafa;letter-spacing:-0.136px;">工具(<u>T</u>)</span>
<span id="t12" class="t" style="left:696.7px;top:10px;line-height:16px;font-size:12px;color:#fafafa;letter-spacing:-0.079px;">扩展(<u>X</u>)</span>
<span id="t13" class="t" style="left:756.5px;top:10px;line-height:16px;font-size:12px;color:#fafafa;letter-spacing:0.118px;">窗口(<u>W</u>)</span>
<span id="t14" class="t" style="left:820.9px;top:10px;line-height:16px;font-size:12px;color:#fafafa;letter-spacing:-0.143px;">帮助(<u>H</u>)</span>
<span id="t15" class="t " style="left:912px;top:10.0px;line-height:16px;font-size:12px;color:#e6e6e6;letter-spacing:0.484px;">搜索</span>
<span id="t16" class="t " style="left:977.5px;top:10.0px;line-height:16px;font-size:12px;color:#ffffff;font-weight:bold;letter-spacing:0.577px;">modalDialogProject</span>
<span id="t17" class="t " style="left:280px;top:40.0px;line-height:16px;font-size:12px;color:#fafafa;letter-spacing:0.656px;">Debug</span>
<span id="t18" class="t " style="left:351px;top:40.0px;line-height:16px;font-size:12px;color:#fafafa;letter-spacing:0.070px;">x64</span>
<span id="t19" class="t " style="left:484px;top:40.0px;line-height:16px;font-size:12px;color:#f0f0f0;letter-spacing:0.434px;">本地 Windows 调试器</span>
<span id="t20" class="t " style="left:1579px;top:40.0px;line-height:16px;font-size:13px;color:#e6e6e6;letter-spacing:0.112px;">GitHub Copilot</span>
<span id="t21" class="t " style="left:12px;top:77.5px;line-height:16px;font-size:12px;color:#c0c0c0;letter-spacing:0.553px;">资源视图 - modalDialogProject</span>
<span id="t22" class="t " style="left:48.8px;top:99.0px;line-height:16px;font-size:12px;color:#ffffff;font-weight:bold;letter-spacing:0.548px;">modalDialogProject</span>
<span id="t23" class="t " style="left:67px;top:119.0px;line-height:16px;font-size:12px;color:#fafafa;letter-spacing:0.545px;">modalDialogProject.rc*</span>
<span id="t24" class="t " style="left:86.3px;top:139.0px;line-height:16px;font-size:12px;color:#fafafa;letter-spacing:0.594px;">Dialog</span>
<span id="t25" class="t " style="left:105.3px;top:159.0px;line-height:16px;font-size:12px;color:#fafafa;letter-spacing:0.043px;">IDD_ABOUTBOX</span>
<span id="t26" class="t " style="left:105.3px;top:179.0px;line-height:16px;font-size:12px;color:#fafafa;letter-spacing:-0.103px;">IDD_MODALDIALOGPROJECT_DIALOG</span>
<span id="t27" class="t " style="left:86.3px;top:199.0px;line-height:16px;font-size:12px;color:#fafafa;letter-spacing:0.438px;">Icon</span>
<span id="t28" class="t " style="left:86.3px;top:219.0px;line-height:16px;font-size:12px;color:#fafafa;letter-spacing:0.577px;">String Table</span>
<span id="t29" class="t " style="left:86.3px;top:239.0px;line-height:16px;font-size:12px;color:#fafafa;letter-spacing:0.545px;">Version</span>
<span id="t30" class="t " style="left:357.6px;top:77.0px;line-height:16px;font-size:12px;color:#ffffff;font-weight:bold;letter-spacing:0.693px;">modalDialo...OG - Dialog*</span>
<span id="t31" class="t tah" style="left:632px;top:322.0px;line-height:16px;font-size:11px;color:#000000;letter-spacing:0.057px;font-weight:400;">Button1</span>
<span id="t32" class="t cj" style="left:374.3px;top:563.5px;line-height:16px;font-size:12px;color:#000000;letter-spacing:-0.539px;font-weight:500;">原型图像</span>
<span id="t33" class="t " style="left:423px;top:564.0px;line-height:16px;font-size:10px;color:#222222;">:</span>
<span id="t34" class="t " style="left:778px;top:562.5px;line-height:16px;font-size:11px;color:#8a8a8a;letter-spacing:2.6px;">..</span>
<span id="t35" class="t cj" style="left:379.9px;top:583.0px;line-height:16px;font-size:12px;color:#9b9b9b;letter-spacing:-0.308px;">透明度</span>
<span id="t36" class="t " style="left:417.6px;top:583.5px;line-height:16px;font-size:10px;color:#9b9b9b;">:</span>
<span id="t37" class="t mono" style="left:577px;top:583.5px;line-height:16px;font-size:11px;color:#9b9b9b;letter-spacing:-0.3px;">50%</span>
<span id="t38" class="t cj" style="left:611.6px;top:583.0px;line-height:16px;font-size:12px;color:#9b9b9b;letter-spacing:-0.008px;">偏移量</span>
<span id="t39" class="t mono" style="left:652px;top:583.5px;line-height:16px;font-size:11px;color:#9b9b9b;letter-spacing:-0.6px;">X:</span>
<span id="t40" class="t mono" style="left:724px;top:583.5px;line-height:16px;font-size:11px;color:#9b9b9b;letter-spacing:-0.6px;">Y:</span>
<span id="t41" class="t " style="left:669px;top:582.8px;line-height:16px;font-size:11px;color:#000000;font-weight:400;">0</span>
<span id="t42" class="t " style="left:741px;top:582.8px;line-height:16px;font-size:11px;color:#000000;font-weight:400;">0</span>
<span id="t43" class="t cj" style="left:357px;top:617.0px;line-height:16px;font-size:12px;color:#c4c4c4;letter-spacing:-0.016px;">输出</span>
<span id="t44" class="t" style="left:360.3px;top:641px;line-height:16px;font-size:12px;color:#fafafa;letter-spacing:0.1px;">显示输出来源(<u>S</u>):</span>
<span id="t45" class="t " style="left:812.6px;top:640.4px;line-height:10px;font-size:8.5px;color:#f0f0f0;font-weight:400;letter-spacing:0.2px;">ab</span>
<span id="t46" class="t " style="left:812.6px;top:646.8px;line-height:10px;font-size:8.5px;color:#f0f0f0;font-weight:400;">c</span>
<span id="t47" class="t cj" style="left:1086px;top:77.5px;line-height:16px;font-size:12px;color:#c4c4c4;letter-spacing:-0.516px;">属性</span>
<span id="t48" class="t " style="left:1087px;top:100.5px;line-height:16px;font-size:12px;color:#ffffff;font-weight:bold;letter-spacing:0.453px;">IDC_BUTTON1 (Button Control)</span>
<span id="t49" class="t " style="left:1287px;top:100.5px;line-height:16px;font-size:12px;color:#e6e6e6;letter-spacing:0.527px;">IButtonEditor</span>
<span id="t50" class="t " style="left:1111.6px;top:125.80000000000001px;line-height:10px;font-size:8px;color:#222;font-weight:bold;">A</span>
<span id="t51" class="t " style="left:1111.3px;top:133.6px;line-height:10px;font-size:9px;color:#f0f0f0;font-weight:bold;">Z</span>
<span id="t52" class="t " style="left:1099.5px;top:150.8px;line-height:16px;font-size:12px;color:#f0f0f0;">(名称)</span>
<span id="t53" class="t " style="left:1249.8px;top:150.8px;line-height:16px;font-size:12px;color:#f0f0f0;width:170.3px;overflow:hidden;letter-spacing:0.35px;">IDC_BUTTON1 (Button Control)</span>
<span id="t54" class="t " style="left:1099.5px;top:169.8px;line-height:16px;font-size:12px;color:#f0f0f0;">ID</span>
<span id="t55" class="t " style="left:1249.8px;top:169.8px;line-height:16px;font-size:12px;color:#f0f0f0;letter-spacing:-0.114px;">IDC_BUTTON1</span>
<span id="t56" class="t " style="left:1099.5px;top:188.8px;line-height:16px;font-size:12px;color:#f0f0f0;">帮助 ID</span>
<span id="t57" class="t " style="left:1249.8px;top:188.8px;line-height:16px;font-size:12px;color:#f0f0f0;letter-spacing:-0.286px;">False</span>
<span id="t58" class="t " style="left:1099.5px;top:207.8px;line-height:16px;font-size:12px;color:#f0f0f0;letter-spacing:-0.005px;">垂直对齐</span>
<span id="t59" class="t " style="left:1249.8px;top:207.8px;line-height:16px;font-size:12px;color:#f0f0f0;letter-spacing:-0.008px;">默认值</span>
<span id="t60" class="t " style="left:1099.5px;top:226.8px;line-height:16px;font-size:12px;color:#f0f0f0;letter-spacing:-0.002px;">从右到左阅读顺序</span>
<span id="t61" class="t " style="left:1249.8px;top:226.8px;line-height:16px;font-size:12px;color:#f0f0f0;letter-spacing:-0.286px;">False</span>
<span id="t62" class="t " style="left:1099.5px;top:245.8px;line-height:16px;font-size:12px;color:#f0f0f0;letter-spacing:-0.003px;">调整大小类型</span>
<span id="t63" class="t " style="left:1249.8px;top:245.8px;line-height:16px;font-size:12px;color:#f0f0f0;letter-spacing:-0.016px;">无</span>
<span id="t64" class="t " style="left:1099.5px;top:264.8px;line-height:16px;font-size:12px;color:#f0f0f0;letter-spacing:-0.016px;">多行</span>
<span id="t65" class="t " style="left:1249.8px;top:264.8px;line-height:16px;font-size:12px;color:#f0f0f0;letter-spacing:-0.286px;">False</span>
<span id="t66" class="t " style="left:1099.5px;top:283.8px;line-height:16px;font-size:12px;color:#f0f0f0;letter-spacing:-0.005px;">接受文件</span>
<span id="t67" class="t " style="left:1249.8px;top:283.8px;line-height:16px;font-size:12px;color:#f0f0f0;letter-spacing:-0.286px;">False</span>
<span id="t68" class="t " style="left:1099.5px;top:302.8px;line-height:16px;font-size:12px;color:#f0f0f0;letter-spacing:-0.005px;">静态边缘</span>
<span id="t69" class="t " style="left:1249.8px;top:302.8px;line-height:16px;font-size:12px;color:#f0f0f0;letter-spacing:-0.286px;">False</span>
<span id="t70" class="t " style="left:1099.5px;top:321.8px;line-height:16px;font-size:12px;color:#f0f0f0;letter-spacing:-0.016px;">可见</span>
<span id="t71" class="t " style="left:1249.8px;top:321.8px;line-height:16px;font-size:12px;color:#f0f0f0;letter-spacing:0.155px;">True</span>
<span id="t72" class="t " style="left:1099.5px;top:340.8px;line-height:16px;font-size:12px;color:#f0f0f0;letter-spacing:-0.004px;">客户端边缘</span>
<span id="t73" class="t " style="left:1249.8px;top:340.8px;line-height:16px;font-size:12px;color:#f0f0f0;letter-spacing:-0.286px;">False</span>
<span id="t74" class="t " style="left:1099.5px;top:359.8px;line-height:16px;font-size:12px;color:#f0f0f0;letter-spacing:-0.005px;">描述文字</span>
<span id="t75" class="t " style="left:1249.8px;top:359.8px;line-height:16px;font-size:12px;color:#f0f0f0;letter-spacing:0.304px;">Button1</span>
<span id="t76" class="t " style="left:1099.5px;top:378.8px;line-height:16px;font-size:12px;color:#f0f0f0;letter-spacing:-0.005px;">模式框架</span>
<span id="t77" class="t " style="left:1249.8px;top:378.8px;line-height:16px;font-size:12px;color:#f0f0f0;letter-spacing:-0.286px;">False</span>
<span id="t78" class="t " style="left:1099.5px;top:397.8px;line-height:16px;font-size:12px;color:#f0f0f0;letter-spacing:-0.005px;">默认按钮</span>
<span id="t79" class="t " style="left:1249.8px;top:397.8px;line-height:16px;font-size:12px;color:#f0f0f0;letter-spacing:-0.286px;">False</span>
<span id="t80" class="t " style="left:1099.5px;top:416.8px;line-height:16px;font-size:12px;color:#f0f0f0;letter-spacing:-0.016px;">平面</span>
<span id="t81" class="t " style="left:1249.8px;top:416.8px;line-height:16px;font-size:12px;color:#f0f0f0;letter-spacing:-0.286px;">False</span>
<span id="t82" class="t " style="left:1099.5px;top:435.8px;line-height:16px;font-size:12px;color:#f0f0f0;letter-spacing:-0.005px;">水平对齐</span>
<span id="t83" class="t " style="left:1249.8px;top:435.8px;line-height:16px;font-size:12px;color:#f0f0f0;letter-spacing:-0.008px;">默认值</span>
<span id="t84" class="t " style="left:1099.5px;top:454.8px;line-height:16px;font-size:12px;color:#f0f0f0;letter-spacing:-0.004px;">所有者描述</span>
<span id="t85" class="t " style="left:1249.8px;top:454.8px;line-height:16px;font-size:12px;color:#f0f0f0;letter-spacing:-0.286px;">False</span>
<span id="t86" class="t " style="left:1099.5px;top:473.8px;line-height:16px;font-size:12px;color:#f0f0f0;letter-spacing:-0.016px;">通知</span>
<span id="t87" class="t " style="left:1249.8px;top:473.8px;line-height:16px;font-size:12px;color:#f0f0f0;letter-spacing:-0.286px;">False</span>
<span id="t88" class="t " style="left:1099.5px;top:492.8px;line-height:16px;font-size:12px;color:#f0f0f0;letter-spacing:-0.016px;">透明</span>
<span id="t89" class="t " style="left:1249.8px;top:492.8px;line-height:16px;font-size:12px;color:#f0f0f0;letter-spacing:-0.286px;">False</span>
<span id="t90" class="t " style="left:1099.5px;top:511.79999999999995px;line-height:16px;font-size:12px;color:#f0f0f0;letter-spacing:-0.016px;">图标</span>
<span id="t91" class="t " style="left:1249.8px;top:511.79999999999995px;line-height:16px;font-size:12px;color:#f0f0f0;letter-spacing:-0.286px;">False</span>
<span id="t92" class="t " style="left:1099.5px;top:530.8px;line-height:16px;font-size:12px;color:#f0f0f0;letter-spacing:-0.016px;">位图</span>
<span id="t93" class="t " style="left:1249.8px;top:530.8px;line-height:16px;font-size:12px;color:#f0f0f0;letter-spacing:-0.286px;">False</span>
<span id="t94" class="t " style="left:1099.5px;top:549.8px;line-height:16px;font-size:12px;color:#f0f0f0;letter-spacing:-0.004px;">文本右对齐</span>
<span id="t95" class="t " style="left:1249.8px;top:549.8px;line-height:16px;font-size:12px;color:#f0f0f0;letter-spacing:-0.286px;">False</span>
<span id="t96" class="t " style="left:1099.5px;top:568.8px;line-height:16px;font-size:12px;color:#f0f0f0;letter-spacing:-0.005px;">移动类型</span>
<span id="t97" class="t " style="left:1249.8px;top:568.8px;line-height:16px;font-size:12px;color:#f0f0f0;letter-spacing:-0.016px;">无</span>
<span id="t98" class="t " style="left:1099.5px;top:587.8px;line-height:16px;font-size:12px;color:#f0f0f0;letter-spacing:-0.008px;">已禁用</span>
<span id="t99" class="t " style="left:1249.8px;top:587.8px;line-height:16px;font-size:12px;color:#f0f0f0;letter-spacing:-0.286px;">False</span>
<span id="t100" class="t " style="left:1099.5px;top:606.8px;line-height:16px;font-size:12px;color:#f0f0f0;letter-spacing:-0.008px;">制表位</span>
<span id="t101" class="t " style="left:1249.8px;top:606.8px;line-height:16px;font-size:12px;color:#f0f0f0;letter-spacing:0.155px;">True</span>
<span id="t102" class="t " style="left:1099.5px;top:625.8px;line-height:16px;font-size:12px;color:#f0f0f0;letter-spacing:-0.016px;">组</span>
<span id="t103" class="t " style="left:1249.8px;top:625.8px;line-height:16px;font-size:12px;color:#f0f0f0;letter-spacing:-0.286px;">False</span>
<span id="t104" class="t cj" style="left:1087px;top:748.0px;line-height:16px;font-size:12px;color:#ffffff;font-weight:bold;letter-spacing:-0.005px;">接受文件</span>
<span id="t105" class="t cj" style="left:1087px;top:766.5px;line-height:16px;font-size:12px;color:#f0f0f0;">指定控件将接受拖放文件。</span>
<span id="t106" class="t cj" style="left:1433.2px;top:77.2px;line-height:16px;font-size:12px;color:#c4c4c4;letter-spacing:-0.758px;">工具箱</span>
<span id="t107" class="t cj" style="left:1436px;top:100.5px;line-height:16px;font-size:12px;color:#cfcfcf;letter-spacing:-0.129px;">搜索工具箱</span>
<span id="t108" class="t cj" style="left:1450px;top:125.0px;line-height:16px;font-size:12px;color:#fafafa;letter-spacing:-0.003px;">对话框编辑器</span>
<span id="t109" class="t cj" style="left:1482.5px;top:146.8px;line-height:16px;font-size:12px;color:#f0f0f0;letter-spacing:-0.016px;">指针</span>
<span id="t110" class="t " style="left:1482.5px;top:168.8px;line-height:16px;font-size:12px;color:#f0f0f0;letter-spacing:0.559px;">Button</span>
<span id="t111" class="t " style="left:1482.5px;top:190.8px;line-height:16px;font-size:12px;color:#f0f0f0;letter-spacing:0.371px;">Check Box</span>
<span id="t112" class="t " style="left:1449px;top:212.5px;line-height:16px;font-size:12.5px;color:#f0f0f0;font-weight:bold;letter-spacing:-0.8px;">ab</span>
<span id="t113" class="t " style="left:1482.5px;top:212.8px;line-height:16px;font-size:12px;color:#f0f0f0;letter-spacing:0.572px;">Edit Control</span>
<span id="t114" class="t " style="left:1482.5px;top:234.8px;line-height:16px;font-size:12px;color:#f0f0f0;letter-spacing:0.850px;">Combo Box</span>
<span id="t115" class="t " style="left:1482.5px;top:256.8px;line-height:16px;font-size:12px;color:#f0f0f0;letter-spacing:0.359px;">List Box</span>
<span id="t116" class="t " style="left:1453.6px;top:276.6px;line-height:8px;font-size:6.5px;color:#f0f0f0;font-weight:bold;letter-spacing:-0.3px;">xyz</span>
<span id="t117" class="t " style="left:1482.5px;top:278.8px;line-height:16px;font-size:12px;color:#f0f0f0;letter-spacing:0.766px;">Group Box</span>
<span id="t118" class="t " style="left:1482.5px;top:300.8px;line-height:16px;font-size:12px;color:#f0f0f0;letter-spacing:0.601px;">Radio Button</span>
<span id="t119" class="t " style="left:1449.5px;top:322.5px;line-height:16px;font-size:13px;color:#f0f0f0;font-weight:bold;font-family:Liberation Serif,serif;font-style:italic;">A</span>
<span id="t120" class="t " style="left:1457.8px;top:323.0px;line-height:16px;font-size:12.5px;color:#f0f0f0;font-weight:bold;font-family:Liberation Serif,serif;font-style:italic;">a</span>
<span id="t121" class="t " style="left:1482.5px;top:322.8px;line-height:16px;font-size:12px;color:#f0f0f0;letter-spacing:0.416px;">Static Text</span>
<span id="t122" class="t " style="left:1482.5px;top:344.8px;line-height:16px;font-size:12px;color:#f0f0f0;letter-spacing:0.473px;">Picture Control</span>
<span id="t123" class="t " style="left:1482.5px;top:366.8px;line-height:16px;font-size:12px;color:#f0f0f0;letter-spacing:0.531px;">Horizontal Scroll Bar</span>
<span id="t124" class="t " style="left:1482.5px;top:388.8px;line-height:16px;font-size:12px;color:#f0f0f0;letter-spacing:0.461px;">Vertical Scroll Bar</span>
<span id="t125" class="t " style="left:1482.5px;top:410.8px;line-height:16px;font-size:12px;color:#f0f0f0;letter-spacing:0.561px;">Slider Control</span>
<span id="t126" class="t " style="left:1482.5px;top:432.8px;line-height:16px;font-size:12px;color:#f0f0f0;letter-spacing:0.541px;">Spin Control</span>
<span id="t127" class="t " style="left:1482.5px;top:454.8px;line-height:16px;font-size:12px;color:#f0f0f0;letter-spacing:0.597px;">Progress Control</span>
<span id="t128" class="t " style="left:1482.5px;top:476.8px;line-height:16px;font-size:12px;color:#f0f0f0;letter-spacing:0.552px;">Hot Key</span>
<span id="t129" class="t " style="left:1482.5px;top:498.8px;line-height:16px;font-size:12px;color:#f0f0f0;letter-spacing:0.482px;">List Control</span>
<span id="t130" class="t " style="left:1482.5px;top:520.8px;line-height:16px;font-size:12px;color:#f0f0f0;letter-spacing:0.614px;">Tree Control</span>
<span id="t131" class="t " style="left:1482.5px;top:542.8px;line-height:16px;font-size:12px;color:#f0f0f0;letter-spacing:0.762px;">Tab Control</span>
<span id="t132" class="t " style="left:1482.5px;top:564.8px;line-height:16px;font-size:12px;color:#f0f0f0;letter-spacing:0.601px;">Animation Control</span>
<span id="t133" class="t " style="left:1451px;top:587.4px;line-height:12px;font-size:10px;color:#ffffff;font-weight:bold;letter-spacing:-0.3px;text-shadow:0 0 1px #000,0 0 1px #000;">2.0</span>
<span id="t134" class="t " style="left:1482.5px;top:586.8px;line-height:16px;font-size:12px;color:#f0f0f0;letter-spacing:0.397px;">Rich Edit 2.0 Control</span>
<span id="t135" class="t " style="left:1450.3px;top:614.6px;line-height:10px;font-size:8.5px;color:#f0f0f0;font-weight:400;letter-spacing:-0.35px;">1/1/1</span>
<span id="t136" class="t " style="left:1482.5px;top:608.8px;line-height:16px;font-size:12px;color:#f0f0f0;letter-spacing:0.443px;">Date Time Picker</span>
<span id="t137" class="t " style="left:1482.5px;top:630.8px;line-height:16px;font-size:12px;color:#f0f0f0;letter-spacing:0.609px;">Month Calendar Control</span>
<span id="t138" class="t " style="left:1482.5px;top:652.8px;line-height:16px;font-size:12px;color:#f0f0f0;letter-spacing:0.550px;">IP Address Control</span>
<span id="t139" class="t " style="left:1482.5px;top:674.8px;line-height:16px;font-size:12px;color:#f0f0f0;letter-spacing:0.579px;">Extended Combo Box</span>
<span id="t140" class="t " style="left:1482.5px;top:696.8px;line-height:16px;font-size:12px;color:#f0f0f0;letter-spacing:0.587px;">Custom Control</span>
<span id="t141" class="t " style="left:1455px;top:719.0px;line-height:10px;font-size:10.5px;color:#ffffff;font-weight:bold;font-style:italic;">A</span>
<span id="t142" class="t " style="left:1482.5px;top:718.8px;line-height:16px;font-size:12px;color:#f0f0f0;letter-spacing:0.318px;">SysLink Control</span>
<span id="t143" class="t " style="left:1482.5px;top:740.8px;line-height:16px;font-size:12px;color:#f0f0f0;letter-spacing:0.558px;">Split Button Control</span>
<span id="t144" class="t " style="left:1482.5px;top:762.8px;line-height:16px;font-size:12px;color:#f0f0f0;letter-spacing:0.739px;">Network Address Control</span>
<svg class="ov" width="1710" height="776" viewBox="0 0 1710 776">
<rect x="1429.5" y="72.5" width="64" height="27" fill="none" stroke="#ed1c24" stroke-width="5"/>
<rect x="1449.5" y="160.8" width="90.2" height="26.6" fill="none" stroke="#ed1c24" stroke-width="5"/>
<path d="M870.5 185.2L1057 173.8L1151.5 167.8L1152.8 177.6L1300 176.8L1432.2 176.7L1432.2 192.7L1300 192.3L1152.8 192.4L1151.5 201.8L1057 196.4Z" fill="none" stroke="#ed1c24" stroke-width="4.7" stroke-linejoin="round"/>
<path d="M872 185.2L922 182.4L922 188.1Z" fill="#ed1c24"/>
</svg>
</body></html>
